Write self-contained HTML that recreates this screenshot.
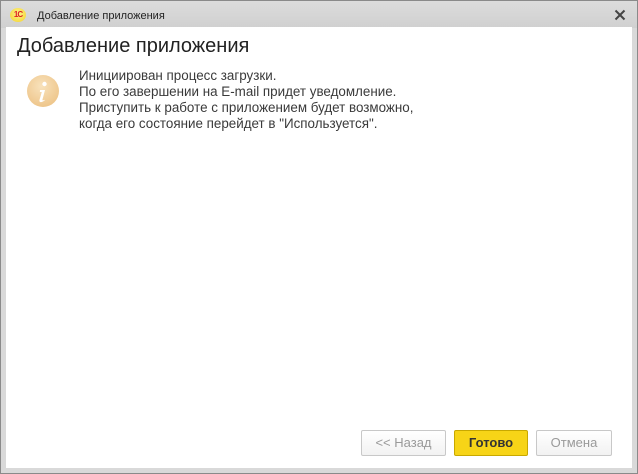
<!DOCTYPE html>
<html><head><meta charset="utf-8"><style>
*{margin:0;padding:0;box-sizing:border-box}
body{width:638px;height:474px;overflow:hidden;font-family:"Liberation Sans",Arial,sans-serif;background:#d8d8d8}
.win{position:absolute;left:0;top:0;width:638px;height:474px;border:1px solid #8a8a8a;background:#d9d9d9}
.tb{position:absolute;left:0;top:0;width:636px;height:27px;background:linear-gradient(#dcdcdc,#d0d0d0)}
.logo{position:absolute;left:9px;top:7px;width:16px;height:14px;border-radius:50%;background:radial-gradient(circle at 50% 40%,#fff48a,#f3d22a);font-size:8px;font-weight:bold;color:#d22;text-align:center;line-height:14px;letter-spacing:-1px}
.tt{position:absolute;left:36px;top:9px;font-size:11px;color:#222}
.x{position:absolute;left:613px;top:8px}
.content{position:absolute;left:5px;top:26px;width:626px;height:441px;background:#fff}
h1{position:absolute;left:11px;top:8px;font-size:20px;font-weight:normal;color:#222}
.icon{position:absolute;left:21px;top:48px;width:32px;height:32px;border-radius:50%;background:radial-gradient(circle at 45% 35%,#f8e2bc,#ebbd7c)}
.txt{position:absolute;left:73px;top:41px;font-size:13.4px;line-height:16px;color:#3a3a3a}
.btn{position:absolute;top:403px;height:26px;border:1px solid #c8c8c8;border-radius:2px;background:linear-gradient(#fff,#f2f2f2);font-size:13px;color:#9a9a9a;text-align:center;line-height:24px}
.ok{background:#f7d417;border-color:#c8a800;color:#333;font-weight:bold}
</style></head><body>
<div class="win">
<div class="tb"><div class="logo">1С</div><div class="tt">Добавление приложения</div>
<svg class="x" width="12" height="12" viewBox="0 0 12 12"><path d="M1.5 1.5L10.5 10.5M10.5 1.5L1.5 10.5" stroke="#444" stroke-width="2"/></svg></div>
<div class="content">
<h1>Добавление приложения</h1>
<div class="icon"><svg width="32" height="32" viewBox="0 0 32 32"><circle cx="17.5" cy="9" r="2.2" fill="#fff"/><path d="M13 15h5l-2.5 9.5c-.3 1 .6 1.2 1.8.2l.5.6c-2 2-6 3-5.3-.4L14.8 17h-1.9z" fill="#fff"/></svg></div>
<div class="txt">Инициирован процесс загрузки.<br>По его завершении на E-mail придет уведомление.<br>Приступить к работе с приложением будет возможно,<br>когда его состояние перейдет в "Используется".</div>
<div class="btn" style="left:355px;width:85px">&lt;&lt; Назад</div>
<div class="btn ok" style="left:448px;width:74px">Готово</div>
<div class="btn" style="left:530px;width:76px">Отмена</div>
</div>
</div>
</body></html>
